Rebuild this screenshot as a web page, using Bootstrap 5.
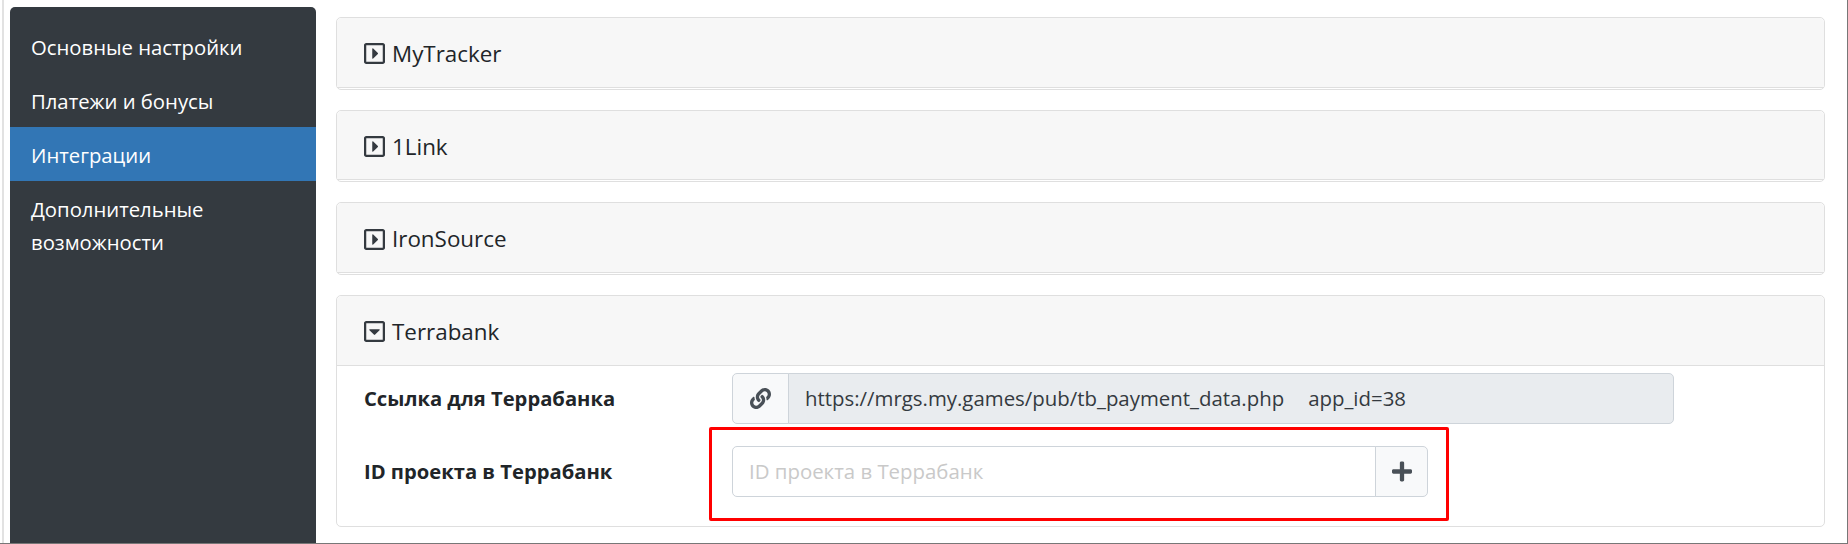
<!DOCTYPE html>
<html lang="ru">
<head>
  <meta charset="UTF-8">
  <title>Интеграции</title>
  <meta name="viewport" content="width=device-width, initial-scale=1">
  <link href="https://cdn.jsdelivr.net/npm/bootstrap@5.3.3/dist/css/bootstrap.min.css" rel="stylesheet">
  <style>
    html, body { height: 100%; }
    body {
      font-family: "Open Sans", "Noto Sans", sans-serif;
      font-size: 20.2px;
      color: #212529;
      overflow: hidden;
    }
    .page-frame {
      height: 544px;
      padding: 7px 22px 0 2px;
      gap: 20px;
      border-right: 1px solid #777;
      border-bottom: 1px solid #777;
    }
    .side-wrap {
      border-left: 2px solid #e2e2e2;
      padding-left: 6px;
      margin-top: -7px;
      padding-top: 7px;
    }
    .side-menu {
      width: 306px;
      height: 100%;
      padding-top: 12px;
      background: #343a40;
      border-radius: 5px 5px 0 0;
    }
    .side-menu .nav-link {
      color: #fff;
      padding: 12px 21px 9px;
      font-size: 20.3px;
      line-height: 33px;
    }
    .side-menu .nav-link.active { background: #3276b5; }
    .main-col { padding-top: 10px; }
    .main-col .card { margin-bottom: 20px; border-radius: 5px; border-color: #dfdfdf; }
    .card.is-closed { padding-bottom: 1px; }
    .main-col .card-header {
      height: 69.67px;
      padding: 3px 27px 0;
      background: #f7f7f7;
      border-bottom-color: #dfdfdf;
      font-size: 22.4px;
      gap: 7px;
    }
    .caret-icon { width: 21px; height: 21px; fill: #343a40; flex: none; }
    .main-col .card-body { padding: 7px 27px 29px; }
    .field-row + .field-row { margin-top: 22px; }
    .field-name { width: 368px; font-weight: 700; font-size: 20.2px; padding-top: 1px; }
    .link-group { width: 942px; }
    .id-group { width: 696px; }
    .field-row .form-control, .field-row .input-group-text {
      height: 51px;
      font-size: 20.4px;
      border-radius: 5px;
      border-color: #ced4da;
      color: #343a40;
    }
    .field-row .form-control { padding: 0 16px; }
    .field-row .form-control::placeholder { color: #c9c9c9; }
    .link-value { background: #e9ecef; }
    .link-value span + span { margin-left: 24px; }
    .link-icon-box { width: 57px; padding: 0; justify-content: center; }
    .add-btn { width: 53px; padding: 0; justify-content: center; }
    .link-icon { width: 21px; height: 21px; fill: #495057; }
    .plus-icon { width: 20px; height: 23px; fill: #495057; }
    .red-mark {
      position: absolute;
      inset: -19px -21px -24px -23px;
      border: 3px solid #f00;
      border-radius: 2px;
      pointer-events: none;
    }
  </style>
</head>
<body>
  <div class="page-frame d-flex">
    <div class="side-wrap">
      <nav class="side-menu nav flex-column flex-nowrap">
        <a class="nav-link" href="#">Основные настройки</a>
        <a class="nav-link" href="#">Платежи и бонусы</a>
        <a class="nav-link active" href="#">Интеграции</a>
        <a class="nav-link" href="#">Дополнительные возможности</a>
      </nav>
    </div>

    <div class="main-col flex-grow-1">
      <div class="card is-closed">
        <div class="card-header d-flex align-items-center">
          <svg class="caret-icon" viewBox="0 32 448 448"><path d="M176 354.9V157.1c0-10.7 12.9-16 20.5-8.5l99 98.9c4.7 4.7 4.7 12.3 0 17l-99 98.9c-7.6 7.5-20.5 2.2-20.5-8.5zM448 80v352c0 26.5-21.5 48-48 48H48c-26.5 0-48-21.5-48-48V80c0-26.5 21.5-48 48-48h352c26.5 0 48 21.5 48 48zm-48 346V86c0-3.3-2.7-6-6-6H54c-3.3 0-6 2.7-6 6v340c0 3.3 2.7 6 6 6h340c3.3 0 6-2.7 6-6z"/></svg>
          <span>MyTracker</span>
        </div>
      </div>
      <div class="card is-closed">
        <div class="card-header d-flex align-items-center">
          <svg class="caret-icon" viewBox="0 32 448 448"><path d="M176 354.9V157.1c0-10.7 12.9-16 20.5-8.5l99 98.9c4.7 4.7 4.7 12.3 0 17l-99 98.9c-7.6 7.5-20.5 2.2-20.5-8.5zM448 80v352c0 26.5-21.5 48-48 48H48c-26.5 0-48-21.5-48-48V80c0-26.5 21.5-48 48-48h352c26.5 0 48 21.5 48 48zm-48 346V86c0-3.3-2.7-6-6-6H54c-3.3 0-6 2.7-6 6v340c0 3.3 2.7 6 6 6h340c3.3 0 6-2.7 6-6z"/></svg>
          <span>1Link</span>
        </div>
      </div>
      <div class="card is-closed">
        <div class="card-header d-flex align-items-center">
          <svg class="caret-icon" viewBox="0 32 448 448"><path d="M176 354.9V157.1c0-10.7 12.9-16 20.5-8.5l99 98.9c4.7 4.7 4.7 12.3 0 17l-99 98.9c-7.6 7.5-20.5 2.2-20.5-8.5zM448 80v352c0 26.5-21.5 48-48 48H48c-26.5 0-48-21.5-48-48V80c0-26.5 21.5-48 48-48h352c26.5 0 48 21.5 48 48zm-48 346V86c0-3.3-2.7-6-6-6H54c-3.3 0-6 2.7-6 6v340c0 3.3 2.7 6 6 6h340c3.3 0 6-2.7 6-6z"/></svg>
          <span>IronSource</span>
        </div>
      </div>
      <div class="card">
        <div class="card-header d-flex align-items-center">
          <svg class="caret-icon" viewBox="0 32 448 448"><path d="M125.1 208h197.8c10.7 0 16.1 13 8.5 20.5l-98.9 98.3c-4.7 4.7-12.2 4.7-16.9 0l-98.9-98.3c-7.7-7.5-2.3-20.5 8.4-20.5zM448 80v352c0 26.5-21.5 48-48 48H48c-26.5 0-48-21.5-48-48V80c0-26.5 21.5-48 48-48h352c26.5 0 48 21.5 48 48zm-48 346V86c0-3.3-2.7-6-6-6H54c-3.3 0-6 2.7-6 6v340c0 3.3 2.7 6 6 6h340c3.3 0 6-2.7 6-6z"/></svg>
          <span>Terrabank</span>
        </div>
        <div class="card-body">
          <div class="field-row d-flex align-items-center">
            <div class="field-name">Ссылка для Террабанка</div>
            <div class="input-group link-group">
              <span class="input-group-text link-icon-box">
                <svg class="link-icon" viewBox="0 0 512 512"><path d="M326.612 185.391c59.747 59.809 58.927 155.698.36 214.59-.11.12-.24.25-.36.37l-67.2 67.2c-59.27 59.27-155.699 59.262-214.96 0-59.27-59.26-59.27-155.7 0-214.96l37.106-37.106c9.84-9.84 26.786-3.3 27.294 10.606.648 17.722 3.826 35.527 9.69 52.721 1.986 5.822.567 12.262-3.783 16.612l-13.087 13.087c-28.026 28.026-28.905 73.66-1.155 101.96 28.024 28.579 74.086 28.749 102.325.51l67.2-67.19c28.191-28.191 28.073-73.757 0-101.83-3.701-3.694-7.429-6.564-10.341-8.569a16.037 16.037 0 0 1-6.947-12.606c-.396-10.567 3.348-21.456 11.698-29.806l21.054-21.055c5.521-5.521 14.182-6.199 20.584-1.731a152.482 152.482 0 0 1 20.522 17.197zM467.547 44.449c-59.261-59.262-155.69-59.27-214.96 0l-67.2 67.2c-.12.12-.25.25-.36.37-58.566 58.892-59.387 154.781.36 214.59a152.454 152.454 0 0 0 20.521 17.196c6.402 4.468 15.064 3.789 20.584-1.731l21.054-21.055c8.35-8.35 12.094-19.239 11.698-29.806a16.037 16.037 0 0 0-6.947-12.606c-2.912-2.005-6.64-4.875-10.341-8.569-28.073-28.073-28.191-73.639 0-101.83l67.2-67.19c28.239-28.239 74.3-28.069 102.325.51 27.75 28.3 26.872 73.934-1.155 101.96l-13.087 13.087c-4.35 4.35-5.769 10.79-3.783 16.612 5.864 17.194 9.042 34.999 9.69 52.721.509 13.906 17.454 20.446 27.294 10.606l37.106-37.106c59.271-59.259 59.271-155.699.001-214.959z"/></svg>
              </span>
              <div class="form-control link-value d-flex align-items-center">
                <span>https://mrgs.my.games/pub/tb_payment_data.php</span>
                <span>app_id=38</span>
              </div>
            </div>
          </div>
          <div class="field-row d-flex align-items-center">
            <div class="field-name">ID проекта в Террабанк</div>
            <div class="position-relative">
              <div class="input-group id-group">
                <input type="text" class="form-control" placeholder="ID проекта в Террабанк">
                <span class="input-group-text add-btn">
                  <svg class="plus-icon" viewBox="0 0 448 512"><path d="M416 208H272V64c0-17.67-14.33-32-32-32h-32c-17.67 0-32 14.33-32 32v144H32c-17.67 0-32 14.33-32 32v32c0 17.67 14.33 32 32 32h144v144c0 17.67 14.33 32 32 32h32c17.67 0 32-14.33 32-32V304h144c17.67 0 32-14.33 32-32v-32c0-17.67-14.33-32-32-32z"/></svg>
                </span>
              </div>
              <div class="red-mark"></div>
            </div>
          </div>
        </div>
      </div>
    </div>
  </div>
  <script src="https://cdn.jsdelivr.net/npm/bootstrap@5.3.3/dist/js/bootstrap.bundle.min.js"></script>
</body>
</html>
